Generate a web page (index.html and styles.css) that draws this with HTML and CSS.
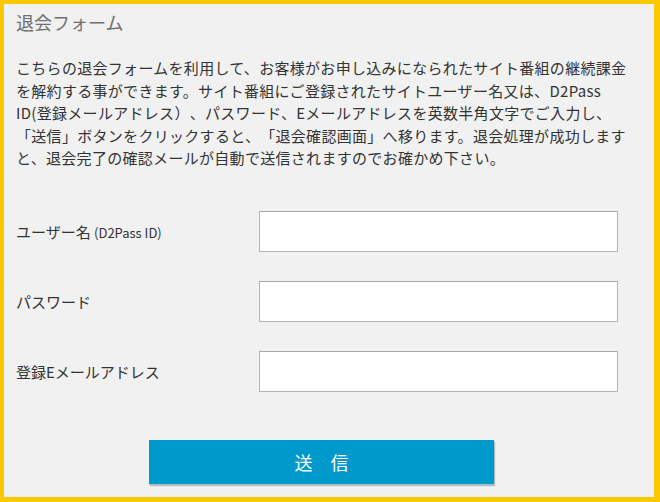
FILE: index.html
```html
<!DOCTYPE html>
<html lang="ja">
<head>
<meta charset="utf-8">
<title>退会フォーム</title>
<link rel="stylesheet" href="styles.css">
</head>
<body>
<div class="frame">
  <h1 class="title">退会フォーム</h1>
  <p class="intro">こちらの退会フォームを利用して、お客様がお申し込みになられたサイト番組の継続課金を解約する事ができます。サイト番組にご登録されたサイトユーザー名又は、D2Pass ID(登録メールアドレス）、パスワード、Eメールアドレスを英数半角文字でご入力し、「送信」ボタンをクリックすると、「退会確認画面」へ移ります。退会処理が成功しますと、退会完了の確認メールが自動で送信されますのでお確かめ下さい。</p>
  <form class="form">
    <div class="row">
      <label class="label">ユーザー名 <span class="small">(D2Pass ID)</span></label>
      <input class="field" type="text">
    </div>
    <div class="row">
      <label class="label">パスワード</label>
      <input class="field" type="password">
    </div>
    <div class="row">
      <label class="label">登録Eメールアドレス</label>
      <input class="field" type="text">
    </div>
    <button class="submit" type="button">送　信</button>
  </form>
</div>
</body>
</html>
```
FILE: styles.css
```css
html, body {
  margin: 0;
  padding: 0;
}
body {
  font-family: "Noto Sans CJK JP", "Noto Sans", sans-serif;
  color: #333;
  text-spacing-trim: space-all;
}
.frame {
  box-sizing: border-box;
  width: 660px;
  height: 502px;
  border-style: solid;
  border-color: #fcc800;
  border-width: 4px 6px 5px 4px;
  background: #f1f1f1;
  padding: 6px 14px 0 12px;
}
.title {
  margin: 0;
  font-size: 18px;
  line-height: 24px;
  font-weight: normal;
  color: #6f6f6f;
}
.intro {
  margin: 23px 0 0;
  font-size: 15px;
  line-height: 22.5px;
  letter-spacing: 0.3px;
  color: #333;
  text-spacing-trim: space-all;
}
.form {
  margin-top: 41px;
  display: flex;
  flex-direction: column;
  gap: 29px;
}
.row {
  display: flex;
  align-items: center;
  height: 41px;
}
.label {
  width: 243px;
  font-size: 15px;
  color: #333;
}
.small {
  font-size: 13px;
}
.field {
  box-sizing: border-box;
  width: 359px;
  height: 41px;
  margin: 0;
  border: 1px solid #b4b4b4;
  border-top-color: #a8a8a8;
  background: #fff;
}
.submit {
  margin: 19px 0 0 133px;
  width: 345px;
  height: 44px;
  border: none;
  background: #0099cc;
  color: #fff;
  font-family: "Noto Sans CJK JP", sans-serif;
  font-size: 18px;
  box-shadow: 1px 2px 1px rgba(60, 90, 110, 0.35);
  padding: 0;
}
```
